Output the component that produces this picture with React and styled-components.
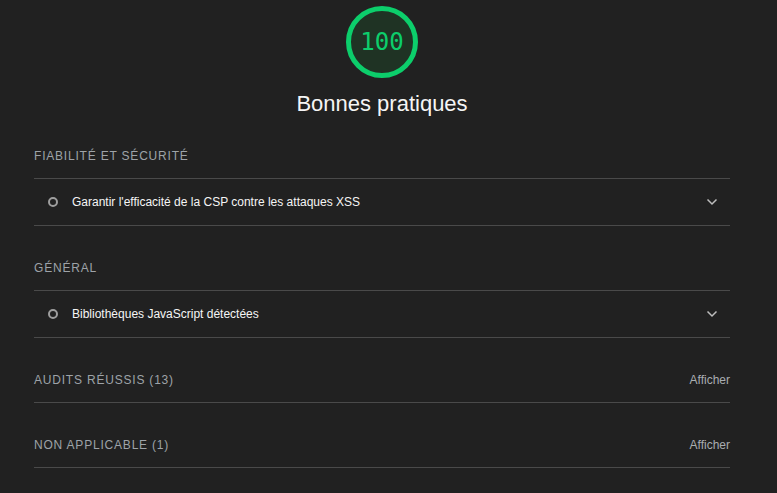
import styled, { createGlobalStyle } from 'styled-components';

const GlobalStyle = createGlobalStyle`
  html, body {
    margin: 0;
    padding: 0;
    background: #212121;
  }
  body {
    font-family: "Liberation Sans", Arial, sans-serif;
    color: #e8e8e8;
  }
`

const Page = styled.main`
  width: 696px;
  margin-left: 34px;
  padding-top: 6px;
`

const Header = styled.header`
  display: flex;
  flex-direction: column;
  align-items: center;
`

const Gauge = styled.div`
  position: relative;
  width: 72px;
  height: 72px;
`

const GaugeValue = styled.span`
  position: absolute;
  inset: 0;
  display: flex;
  align-items: center;
  justify-content: center;
  font-family: "DejaVu Sans Mono", "Liberation Mono", monospace;
  font-size: 24px;
  color: #0cce6b;
`

const Title = styled.h1`
  margin: 13px 0 0;
  font-size: 22px;
  font-weight: normal;
  line-height: 26px;
  color: #f5f5f5;
`

const Group = styled.section`
  margin-top: ${(p) => p.$top || 0}px;
`

const GroupHead = styled.div`
  display: flex;
  align-items: center;
  justify-content: space-between;
  height: ${(p) => p.$h || 65}px;
  padding-top: ${(p) => p.$pt || 0}px;
  border-bottom: 1px solid #4a4a4a;
  box-sizing: border-box;
`

const GroupTitle = styled.span`
  font-size: 12px;
  letter-spacing: 0.8px;
  text-transform: uppercase;
  color: #9ea3a8;
`

const Toggle = styled.span`
  font-size: 12px;
  color: #a9adb1;
`

const Item = styled.div`
  display: flex;
  align-items: center;
  height: 47px;
  border-bottom: 1px solid #4a4a4a;
  box-sizing: border-box;
  padding-left: 14px;
  padding-right: 12px;
  font-size: 12px;
  color: #f5f5f5;
`

const Dot = styled.span`
  width: 6px;
  height: 6px;
  border: 2px solid #9e9e9e;
  border-radius: 50%;
  margin-right: 14px;
`

const ItemText = styled.span`
  flex: 1;
`

const Chevron = () => (
  <svg width="12" height="8" viewBox="0 0 12 8">
    <path d="M1.5 1.5 L6 6 L10.5 1.5" fill="none" stroke="#bdbdbd" strokeWidth="1.5" />
  </svg>
)

function App() {
  return (
    <>
      <GlobalStyle />
      <Page>
        <Header>
          <Gauge>
            <svg width="72" height="72" viewBox="0 0 72 72">
              <circle cx="36" cy="36" r="33.5" fill="#1f3324" stroke="#0cce6b" strokeWidth="5" />
            </svg>
            <GaugeValue>100</GaugeValue>
          </Gauge>
          <Title>Bonnes pratiques</Title>
        </Header>

        <Group $top={15}>
          <GroupHead $h={47} $pt={2}>
            <GroupTitle>Fiabilité et sécurité</GroupTitle>
          </GroupHead>
          <Item>
            <Dot />
            <ItemText>Garantir l'efficacité de la CSP contre les attaques XSS</ItemText>
            <Chevron />
          </Item>
        </Group>

        <Group>
          <GroupHead $pt={20}>
            <GroupTitle>Général</GroupTitle>
          </GroupHead>
          <Item>
            <Dot />
            <ItemText>Bibliothèques JavaScript détectées</ItemText>
            <Chevron />
          </Item>
        </Group>

        <Group>
          <GroupHead $pt={20}>
            <GroupTitle>Audits réussis (13)</GroupTitle>
            <Toggle>Afficher</Toggle>
          </GroupHead>
          <GroupHead $pt={20}>
            <GroupTitle>Non applicable (1)</GroupTitle>
            <Toggle>Afficher</Toggle>
          </GroupHead>
        </Group>
      </Page>
    </>
  )
}

export default App
